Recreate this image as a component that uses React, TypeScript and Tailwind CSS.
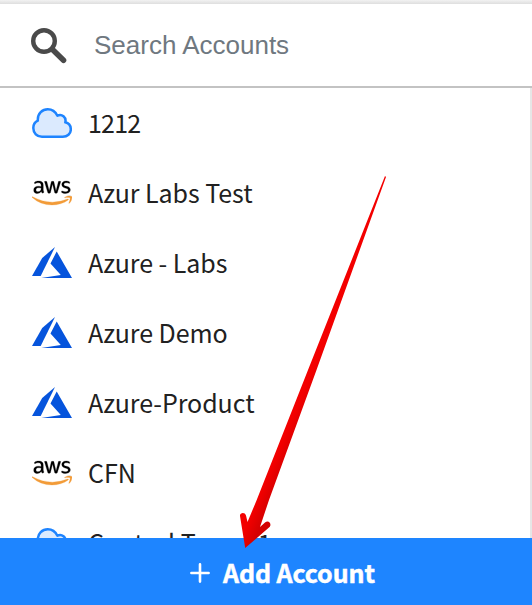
import { FaAws } from "react-icons/fa";

type Provider = "cloud" | "aws" | "azure";

const accounts: { name: string; provider: Provider }[] = [
  { name: "1212", provider: "cloud" },
  { name: "Azur Labs Test", provider: "aws" },
  { name: "Azure - Labs", provider: "azure" },
  { name: "Azure Demo", provider: "azure" },
  { name: "Azure-Product", provider: "azure" },
  { name: "CFN", provider: "aws" },
  { name: "Control Tower 1", provider: "cloud" },
];

function CloudIcon() {
  return (
    <svg viewBox="0 0 40 32" className="h-8 w-10">
      <path
        d="M10 29.8H30.8C35.3 29.8 38.8 26.7 38.8 22.4C38.8 18.9 36.6 16.2 33.3 15.3C34.6 10.5 29.8 6.3 25.4 8.7C23.4 4.7 19.9 2.3 15.8 2.3C10.2 2.3 5.8 6.7 5.8 12.4V13.7C3 15 1.3 17.7 1.3 21C1.3 26 5 29.8 10 29.8Z"
        fill="#dbeafe"
        stroke="#1e84ff"
        strokeWidth="2.5"
        strokeLinejoin="round"
      />
    </svg>
  );
}

function AwsIcon() {
  return (
    <span className="flex h-8 w-10">
      <svg width="0" height="0" className="absolute">
        <defs>
          <linearGradient id="awsFill" x1="0" y1="0" x2="0" y2="1">
            <stop offset="0.64" stopColor="#000" />
            <stop offset="0.64" stopColor="#f29b38" />
          </linearGradient>
        </defs>
      </svg>
      <FaAws fill="url(#awsFill)" stroke="url(#awsFill)" strokeWidth="4" className="h-8 w-10" />
    </span>
  );
}

function AzureIcon() {
  return (
    <svg viewBox="0 0 40 32" className="h-8 w-10" fill="#0654dc">
      <path d="M23 0L10.2 11L0 29H8.7Z" />
      <path d="M24.7 4.5L18.5 16.5L28.8 28.1L9.2 31H40Z" />
    </svg>
  );
}

const icons = { cloud: CloudIcon, aws: AwsIcon, azure: AzureIcon };

export default function App() {
  return (
    <div className="relative flex h-[605px] w-[532px] flex-col overflow-hidden bg-white font-['Noto_Sans_CJK_SC',sans-serif]">
      <div className="h-1 shrink-0 bg-linear-to-b from-[#f2f2f2] to-[#dedede]" />
      <header className="flex h-[84px] shrink-0 items-center rounded-tl-[4px] border-b-2 border-[#c3c3c3] bg-white pt-px pl-[31px]">
        <svg viewBox="0 0 36 36" className="h-9 w-9" fill="none" stroke="#4a4a4a">
          <circle cx="13" cy="13" r="10.8" strokeWidth="4.4" />
          <path d="M21.5 21.5L32.5 32.3" strokeWidth="5.6" strokeLinecap="round" />
        </svg>
        <span className="ml-[27px] font-['Liberation_Sans',Arial,sans-serif] text-[26px] text-[#6f7880]">
          Search Accounts
        </span>
      </header>
      <ul className="min-h-0 flex-1 overflow-hidden border-r-2 border-[#e6e6e6]">
        {accounts.map(({ name, provider }) => {
          const Icon = icons[provider];
          const tracking = /^\d+$/.test(name) ? "tracking-[-0.8px]" : "tracking-[-0.05px]";
          return (
            <li key={name} className="flex h-[70px] items-center gap-4 pl-8">
              <Icon />
              <span className={`pb-0.5 text-[25px] leading-8 whitespace-pre text-[#212121] ${tracking}`}>{name}</span>
            </li>
          );
        })}
      </ul>
      <button className="flex h-[67px] shrink-0 items-center bg-[#1e85ff] pt-[3px] pl-[190px] text-white">
        <svg viewBox="0 0 20 20" className="h-5 w-5" stroke="currentColor" strokeWidth="2.6" strokeLinecap="round">
          <path d="M10 1.4V18.6M1.4 10H18.6" />
        </svg>
        <span className="ml-[13px] pb-0.5 text-[25px] leading-8 font-bold tracking-[-0.1px] [-webkit-text-stroke:0.5px_white]">
          Add Account
        </span>
      </button>
      <svg viewBox="0 0 532 605" className="pointer-events-none absolute inset-0 h-[605px] w-[532px]">
        <defs>
          <linearGradient id="arrowFill" gradientUnits="userSpaceOnUse" x1="251" y1="510" x2="265" y2="516">
            <stop offset="0.1" stopColor="#f30000" />
            <stop offset="1" stopColor="#d40000" />
          </linearGradient>
        </defs>
        <path
          d="M385 176L308 370L256.7 500L247.5 522L246 515.5C245 511.5 239.5 512.5 240 516L245.2 548L269 527.5C272.5 524.5 269 519.5 265 522.5L260 527L269 500L316.5 370L386 177Z"
          fill="url(#arrowFill)"
        />
      </svg>
    </div>
  );
}
